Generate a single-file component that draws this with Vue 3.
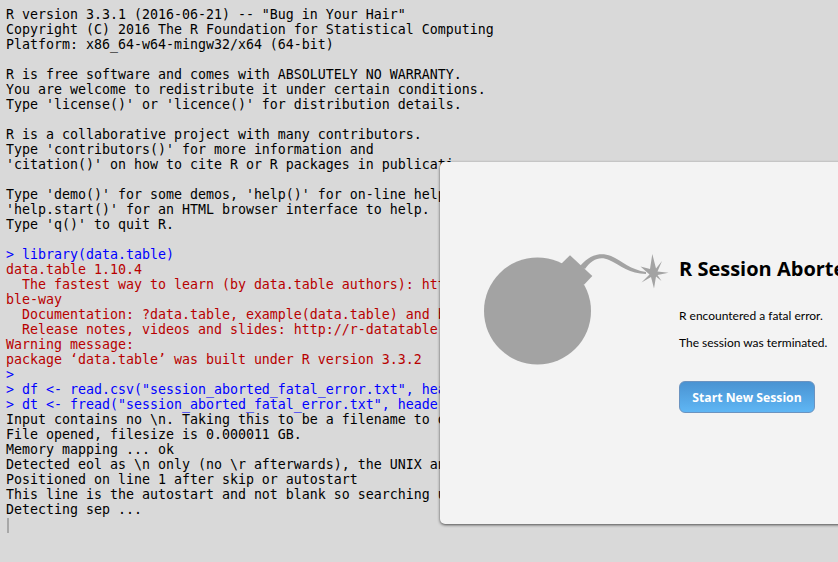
<script setup>
const lines = [
  ['o', 'R version 3.3.1 (2016-06-21) -- "Bug in Your Hair"'],
  ['o', 'Copyright (C) 2016 The R Foundation for Statistical Computing'],
  ['o', 'Platform: x86_64-w64-mingw32/x64 (64-bit)'],
  ['o', ''],
  ['o', 'R is free software and comes with ABSOLUTELY NO WARRANTY.'],
  ['o', 'You are welcome to redistribute it under certain conditions.'],
  ['o', "Type 'license()' or 'licence()' for distribution details."],
  ['o', ''],
  ['o', 'R is a collaborative project with many contributors.'],
  ['o', "Type 'contributors()' for more information and"],
  ['o', "'citation()' on how to cite R or R packages in publicati"],
  ['o', ''],
  ['o', "Type 'demo()' for some demos, 'help()' for on-line help, or"],
  ['o', "'help.start()' for an HTML browser interface to help."],
  ['o', "Type 'q()' to quit R."],
  ['o', ''],
  ['p', '> library(data.table)'],
  ['e', 'data.table 1.10.4'],
  ['e', '  The fastest way to learn (by data.table authors): https://www.datacamp.com/courses/data-analysis-the-data-ta'],
  ['e', 'ble-way'],
  ['e', '  Documentation: ?data.table, example(data.table) and browseVignettes("data.table")'],
  ['e', '  Release notes, videos and slides: http://r-datatable.com'],
  ['e', 'Warning message:'],
  ['e', "package ‘data.table’ was built under R version 3.3.2"],
  ['p', '>'],
  ['p', '> df <- read.csv("session_aborted_fatal_error.txt", header = TRUE)'],
  ['p', '> dt <- fread("session_aborted_fatal_error.txt", header = TRUE, verbose = TRUE)'],
  ['o', 'Input contains no \\n. Taking this to be a filename to open'],
  ['o', 'File opened, filesize is 0.000011 GB.'],
  ['o', 'Memory mapping ... ok'],
  ['o', 'Detected eol as \\n only (no \\r afterwards), the UNIX and Mac standard.'],
  ['o', 'Positioned on line 1 after skip or autostart'],
  ['o', 'This line is the autostart and not blank so searching up for the last non-blank'],
  ['o', 'Detecting sep ...'],
]
</script>

<template>
  <div class="screen">
    <div class="console">
      <div v-for="(l, i) in lines" :key="i" class="line" :class="l[0]">{{ l[1] }}</div>
      <div class="line"><span class="caret"></span></div>
    </div>
    <div class="dialog">
      <svg class="bomb" width="186" height="172" viewBox="0 0 186 172" aria-hidden="true">
        <g transform="translate(-483 -252)">
          <circle cx="537.5" cy="311" r="53.5" fill="#a3a3a3" />
          <path d="M570 255.3 L592.3 276 L584 284.7 L560 265 Z" fill="#a3a3a3" />
          <path d="M580 266 C590 254 601 252 611 256 C622 261 631 270 646 272 L646 274 C630 274 620 265 609 260 C600 256 592 259 585 269 Z" fill="#a3a3a3" />
          <path d="M652.3 254 L656 268.5 L662 261 L657.5 271.5 L668.5 272.7 L657.5 275 L661.5 281 L656 276.5 L654 288.5 L651 277 L641.5 282.5 L649.5 274.5 L640.5 266.5 L650 269 Z" fill="#a3a3a3" />
        </g>
      </svg>
      <div class="body">
        <h1 class="title">R Session Aborted</h1>
        <p class="msg first">R encountered a fatal error.</p>
        <p class="msg">The session was terminated.</p>
        <button class="restart" type="button">Start New Session</button>
      </div>
    </div>
  </div>
</template>

<style>
html, body { margin: 0; overflow: hidden; background: #d9d9d9; }
</style>

<style scoped>
.screen {
  position: relative;
  width: 838px;
  height: 562px;
  overflow: hidden;
  background: #d9d9d9;
}
.console {
  padding: 7px 0 0 6px;
  font: 13.29px/15px "DejaVu Sans Mono", monospace;
  white-space: pre;
  color: #000;
}
.line { height: 15px; }
.p { color: #0000ff; }
.e { color: #b80000; }
.caret {
  display: block;
  width: 2px;
  height: 15px;
  margin: 1px 0 0 1px;
  background: #a8a8a8;
}
.dialog {
  position: absolute;
  left: 440px;
  top: 162px;
  width: 520px;
  height: 362px;
  display: flex;
  box-sizing: border-box;
  padding: 90px 0 0 43px;
  background: #f3f3f3;
  border-radius: 5px;
  box-shadow: 0 1px 3px rgba(0, 0, 0, 0.65);
}
.bomb { flex: none; margin-right: 10px; }
.body {
  padding-top: 4px;
  font-family: "Lato", sans-serif;
  color: #000;
}
.title {
  margin: 0;
  font-family: "Open Sans", sans-serif;
  font-size: 20px;
  line-height: 26px;
  font-weight: 700;
  white-space: nowrap;
}
.msg {
  margin: 0;
  font-size: 12px;
  line-height: 17px;
  padding-top: 10px;
  white-space: nowrap;
}
.msg.first { padding-top: 25px; }
.restart {
  display: block;
  box-sizing: border-box;
  width: 136px;
  height: 32px;
  margin-top: 30px;
  padding: 1px 0 0;
  border: 1px solid #6b93c0;
  border-radius: 6px;
  background: linear-gradient(#4a93d2, #5fb6f4);
  color: #fff;
  font: 700 12.2px "Open Sans", sans-serif;
}
</style>
